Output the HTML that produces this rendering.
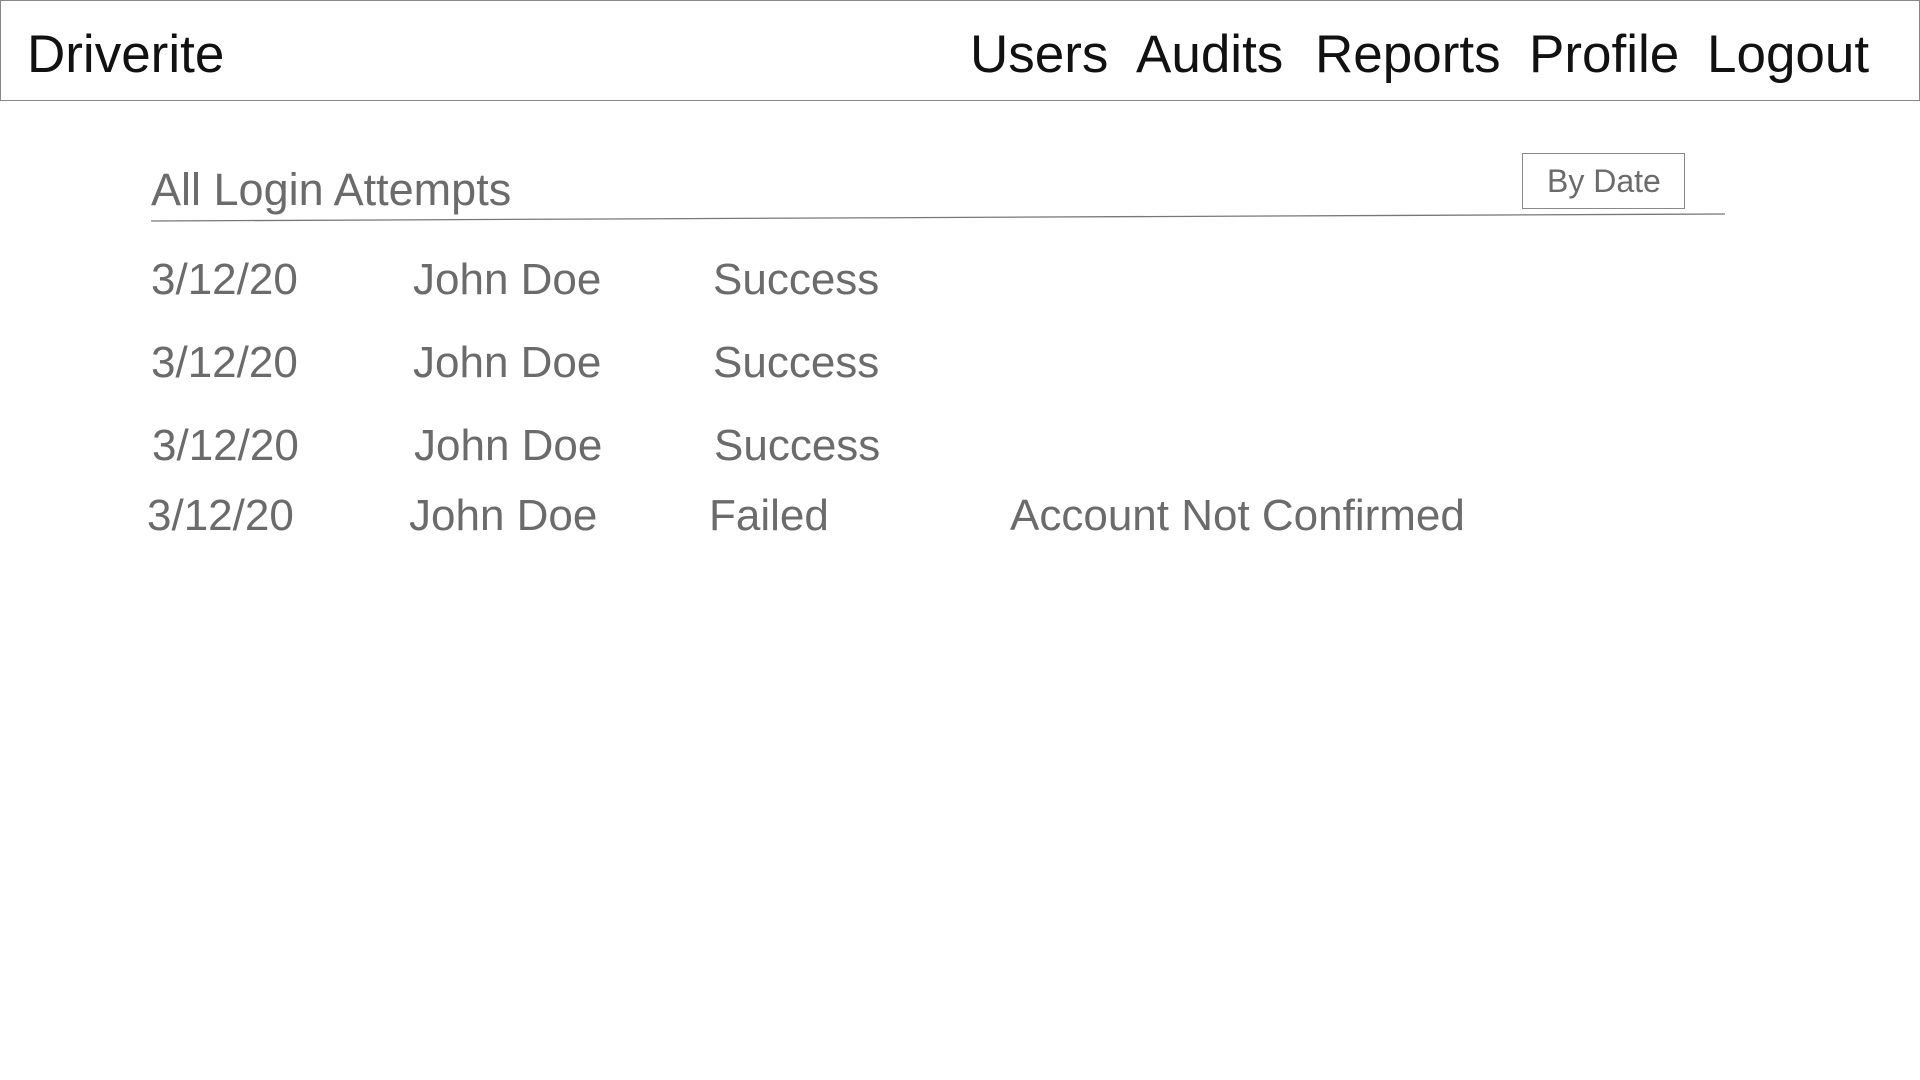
<!DOCTYPE html>
<html><head><meta charset="utf-8"><style>
body{margin:0;width:1920px;height:1080px;background:#fff;position:relative;overflow:hidden;font-family:"Liberation Sans",sans-serif;}
.a{position:absolute;line-height:1;white-space:nowrap;}
.hdr{position:absolute;left:0;top:0;width:1918px;height:99px;border:1px solid #888;}
.n{font-size:53px;color:#111;top:28px;}
.r{font-size:44px;color:#6b6b6b;}
</style></head><body>
<div class="hdr"></div>
<div class="a n" style="left:27px">Driverite</div>
<div class="a n" style="left:970px">Users</div>
<div class="a n" style="left:1136px">Audits</div>
<div class="a n" style="left:1315px">Reports</div>
<div class="a n" style="left:1529px">Profile</div>
<div class="a n" style="left:1707px">Logout</div>
<div class="a" style="left:151px;top:167px;font-size:45px;color:#6b6b6b">All Login Attempts</div>
<svg style="position:absolute;left:0;top:0" width="1920" height="300"><line x1="151" y1="221" x2="1725" y2="214" stroke="#777" stroke-width="1.3"/></svg>
<div style="position:absolute;left:1522px;top:153px;width:161px;height:54px;border:1px solid #888;"></div>
<div class="a" style="left:1547px;top:165px;font-size:32px;color:#6b6b6b">By Date</div>
<div class="a r" style="left:151px;top:258px">3/12/20</div><div class="a r" style="left:413px;top:258px">John Doe</div><div class="a r" style="left:713px;top:258px">Success</div>
<div class="a r" style="left:151px;top:341px">3/12/20</div><div class="a r" style="left:413px;top:341px">John Doe</div><div class="a r" style="left:713px;top:341px">Success</div>
<div class="a r" style="left:152px;top:424px">3/12/20</div><div class="a r" style="left:414px;top:424px">John Doe</div><div class="a r" style="left:714px;top:424px">Success</div>
<div class="a r" style="left:147px;top:494px">3/12/20</div><div class="a r" style="left:409px;top:494px">John Doe</div><div class="a r" style="left:709px;top:494px">Failed</div><div class="a r" style="left:1010px;top:494px">Account Not Confirmed</div>
</body></html>
